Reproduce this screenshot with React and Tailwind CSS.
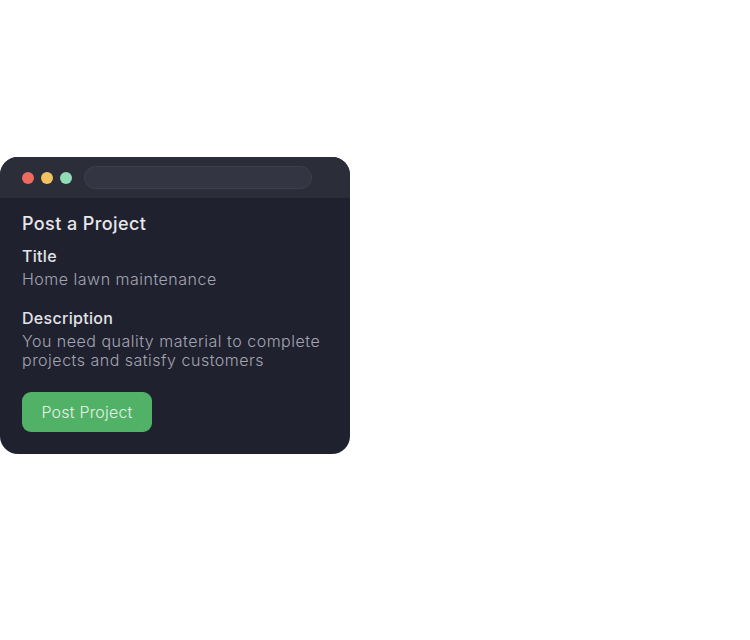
import React from "react";

const Field = ({ label, children }) => (
  <div className="flex flex-col">
    <span className="text-[16px] leading-[20px] font-medium tracking-[0.3px] text-[#e2e3e8]">{label}</span>
    <p className="mt-[4px] text-[16px] leading-[19px] font-light tracking-[0.5px] text-[#a3a5b3]">{children}</p>
  </div>
);

export default function App() {
  return (
    <div className="w-[750px] h-[640px] bg-white pt-[157px] font-['Inter',sans-serif]">
      <div className="w-[350px] rounded-[18px] overflow-hidden bg-[#20212e]">
        {/* window chrome */}
        <div className="h-[41px] bg-[#2b2d39] flex items-center pl-[22px] gap-[7px]">
          <span className="w-3 h-3 rounded-full bg-[#ec6a5e]" />
          <span className="w-3 h-3 rounded-full bg-[#f4c361]" />
          <span className="w-3 h-3 rounded-full bg-[#8fdcb7]" />
          <div className="ml-[5px] w-[228px] h-[23px] rounded-full bg-[#333542] border border-[#3e404d]" />
        </div>

        <div className="px-[22px] pt-[14px] pb-[22px] flex flex-col">
          <h2 className="text-[18px] leading-[24px] font-medium tracking-[0.4px] text-[#e6e7ec]">Post a Project</h2>
          <div className="mt-[10px]">
            <Field label="Title">Home lawn maintenance</Field>
          </div>
          <div className="mt-[19px]">
            <Field label="Description">You need quality material to complete projects and satisfy customers</Field>
          </div>
          <button className="mt-[22px] w-[130px] h-[40px] rounded-[9px] bg-[#51b166] text-[16px] font-light tracking-[0.2px] text-[#e4f2e6]">
            Post Project
          </button>
        </div>
      </div>
    </div>
  );
}
